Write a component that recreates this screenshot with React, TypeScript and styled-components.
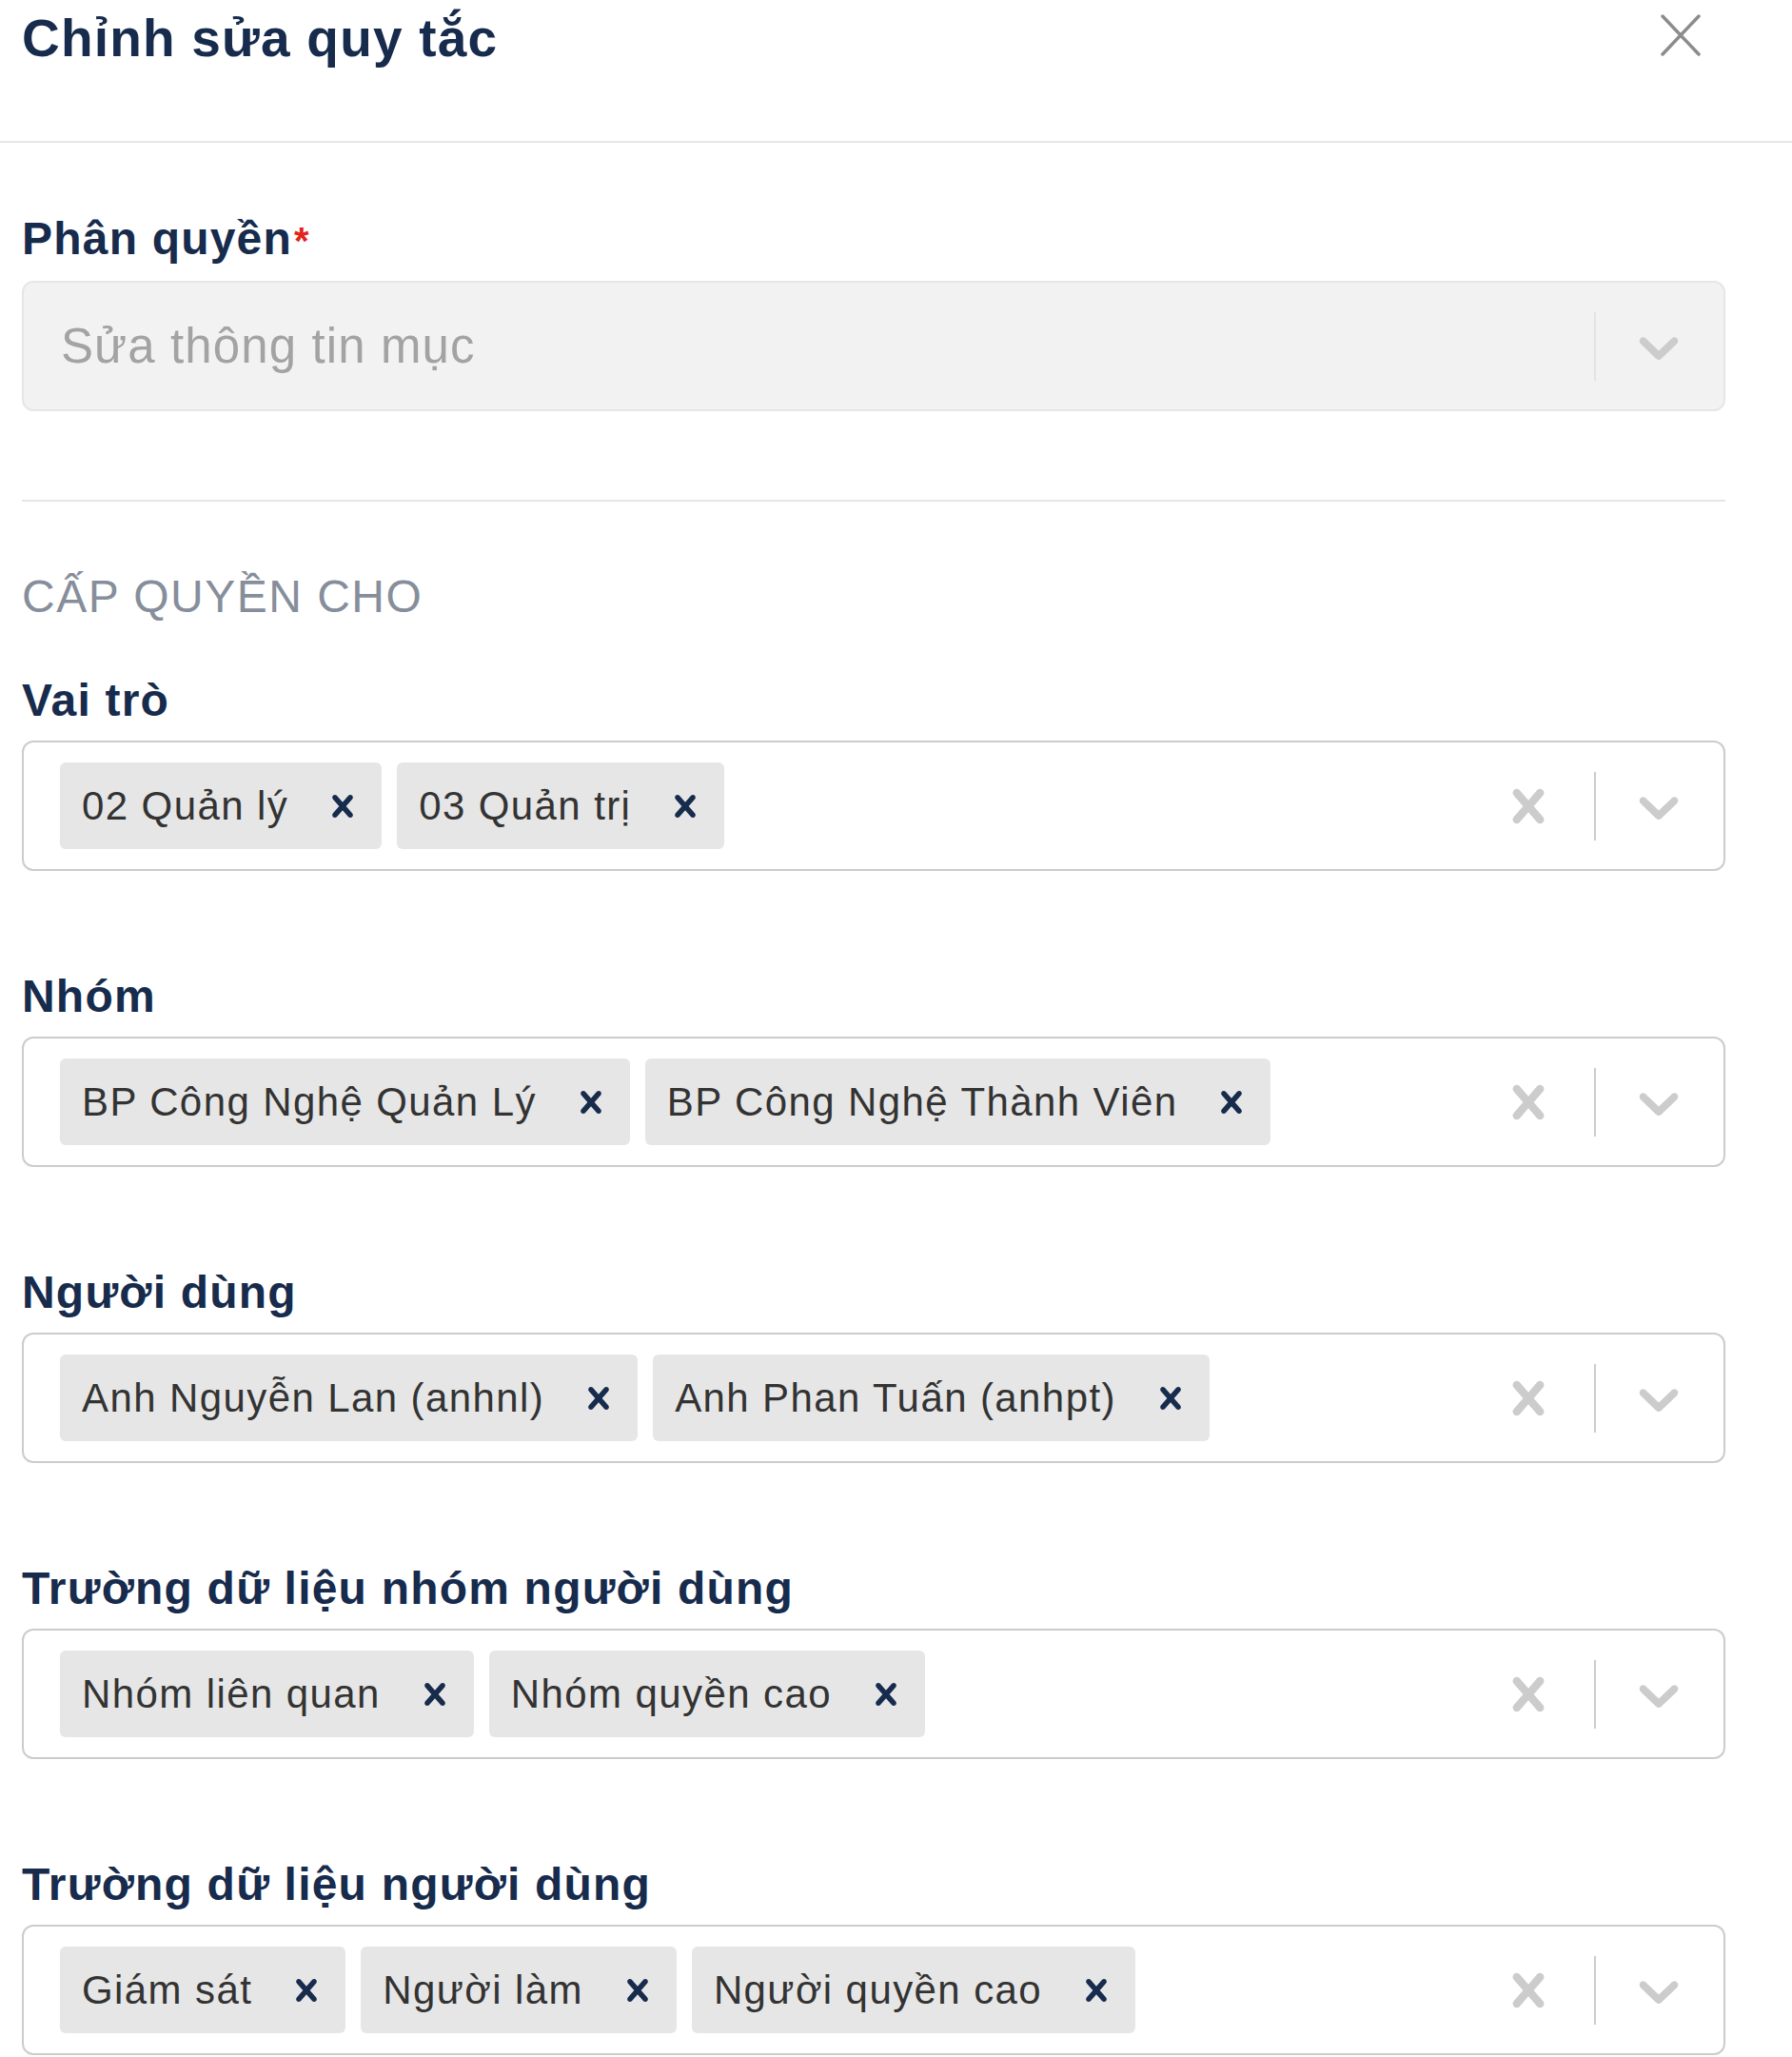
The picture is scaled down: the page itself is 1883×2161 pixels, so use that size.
import React from "react";
import styled, { createGlobalStyle } from "styled-components";

const GlobalStyle = createGlobalStyle`
  *, *::before, *::after { box-sizing: border-box; }
  html, body { margin: 0; padding: 0; background: #ffffff; }
  body { font-family: "Liberation Sans", Arial, sans-serif; color: #172b4d; }
`;

const CHEVRON =
  "M4.516 7.548c0.436-0.446 1.043-0.481 1.576 0l3.908 3.747 3.908-3.747c0.533-0.481 1.141-0.446 1.574 0 0.436 0.445 0.408 1.197 0 1.615-0.406 0.418-4.695 4.502-4.695 4.502-0.217 0.223-0.502 0.335-0.787 0.335s-0.57-0.112-0.789-0.335c0 0-4.287-4.084-4.695-4.502s-0.436-1.17 0-1.615z";
const CROSS =
  "M14.348 14.849c-0.469 0.469-1.229 0.469-1.697 0l-2.651-3.030-2.651 3.029c-0.469 0.469-1.229 0.469-1.697 0-0.469-0.469-0.469-1.229 0-1.697l2.758-3.15-2.759-3.152c-0.469-0.469-0.469-1.228 0-1.697s1.228-0.469 1.697 0l2.652 3.031 2.651-3.031c0.469-0.469 1.228-0.469 1.697 0s0.469 1.229 0 1.697l-2.758 3.152 2.758 3.15c0.469 0.469 0.469 1.229 0 1.698z";

const Page = styled.div`
  width: 1883px;
  min-height: 2161px;
  background: #fff;
`;

const Header = styled.header`
  height: 150px;
  display: flex;
  align-items: flex-start;
  justify-content: space-between;
  padding: 13px 96px 0 23px;
  border-bottom: 2px solid #e6e6e6;
`;

const Title = styled.h1`
  margin: 0;
  font-size: 55px;
  line-height: 55px;
  font-weight: 700;
  letter-spacing: 1.2px;
  color: #172b4d;
`;

const CloseButton = styled.button`
  display: block;
  margin: 2px 0 0;
  padding: 0;
  border: 0;
  background: transparent;
  width: 42px;
  height: 44px;
  color: #8c8c8c;
  svg { display: block; }
`;

const Body = styled.main`
  display: flex;
  flex-direction: column;
  padding: 73px 70px 0 23px;
`;

const Field = styled.section`
  display: flex;
  flex-direction: column;
`;

const FieldList = styled.div`
  display: flex;
  flex-direction: column;
  gap: 104px;
`;

const Label = styled.label`
  display: block;
  margin-bottom: 14px;
  font-size: 48px;
  line-height: 56px;
  font-weight: 700;
  letter-spacing: 1.2px;
  color: #172b4d;
  white-space: nowrap;
`;

const Required = styled.span`
  margin-left: 2px;
  color: #e3241b;
  font-size: 40px;
`;

const Divider = styled.hr`
  margin: 93px 0 0;
  border: 0;
  height: 2px;
  background: #e6e6e6;
`;

const SectionHeading = styled.h2`
  margin: 72px 0 53px;
  font-size: 48px;
  line-height: 56px;
  font-weight: 400;
  letter-spacing: 1.5px;
  color: #878e9b;
`;

const Control = styled.div<{ $disabled?: boolean }>`
  height: 137px;
  display: flex;
  align-items: center;
  border: 2px solid ${(p) => (p.$disabled ? "#e6e6e6" : "#cccccc")};
  background: ${(p) => (p.$disabled ? "#f2f2f2" : "#ffffff")};
  border-radius: 12px;
`;

const ValueContainer = styled.div<{ $multi?: boolean }>`
  flex: 1;
  min-width: 0;
  display: flex;
  align-items: center;
  gap: 16px;
  padding-left: ${(p) => (p.$multi ? 38 : 39)}px;
`;

const SingleValue = styled.span`
  font-size: 51px;
  letter-spacing: 1.1px;
  color: #a3a3a3;
  white-space: nowrap;
`;

const Tag = styled.span`
  display: flex;
  align-items: center;
  height: 91px;
  padding: 0 29px 0 23px;
  background: #e6e6e6;
  border-radius: 6px;
`;

const TagText = styled.span`
  font-size: 42px;
  letter-spacing: 1.4px;
  color: #333333;
  white-space: nowrap;
`;

const TagRemove = styled.span`
  display: flex;
  margin-left: 45px;
  color: #172b4d;
`;

const Indicators = styled.div`
  display: flex;
  align-items: center;
  align-self: stretch;
  padding-right: 33px;
`;

const IndicatorIcon = styled.span`
  display: flex;
  width: 70px;
  height: 70px;
  color: #cccccc;
`;

const Separator = styled.span<{ $disabled?: boolean }>`
  width: 2px;
  height: 72px;
  margin: 0 31px 0 34px;
  background: ${(p) => (p.$disabled ? "#e3e3e3" : "#cccccc")};
`;

const Icon = ({ d, size, box = "0 0 20 20" }: { d: string; size: number; box?: string }) => (
  <svg width={size} height={size} viewBox={box} fill="currentColor" aria-hidden="true">
    <path d={d} />
  </svg>
);

type FieldData = { label: string; values: string[] };

const fields: FieldData[] = [
  { label: "Vai trò", values: ["02 Quản lý", "03 Quản trị"] },
  { label: "Nhóm", values: ["BP Công Nghệ Quản Lý", "BP Công Nghệ Thành Viên"] },
  { label: "Người dùng", values: ["Anh Nguyễn Lan (anhnl)", "Anh Phan Tuấn (anhpt)"] },
  { label: "Trường dữ liệu nhóm người dùng", values: ["Nhóm liên quan", "Nhóm quyền cao"] },
  { label: "Trường dữ liệu người dùng", values: ["Giám sát", "Người làm", "Người quyền cao"] },
];

const MultiSelect = ({ values }: { values: string[] }) => (
  <Control>
    <ValueContainer $multi>
      {values.map((v) => (
        <Tag key={v}>
          <TagText>{v}</TagText>
          <TagRemove>
            <Icon d={CROSS} size={24} box="4.8 4.8 10.4 10.4" />
          </TagRemove>
        </Tag>
      ))}
    </ValueContainer>
    <Indicators>
      <IndicatorIcon>
        <Icon d={CROSS} size={70} />
      </IndicatorIcon>
      <Separator />
      <IndicatorIcon>
        <Icon d={CHEVRON} size={70} />
      </IndicatorIcon>
    </Indicators>
  </Control>
);

export default function App() {
  return (
    <Page>
      <GlobalStyle />
      <Header>
        <Title>Chỉnh sửa quy tắc</Title>
        <CloseButton aria-label="Đóng">
          <svg width="42" height="44" viewBox="0 0 42 44" aria-hidden="true">
            <path d="M2 2 L40 42 M40 2 L2 42" stroke="currentColor" strokeWidth="3.5" strokeLinecap="round" />
          </svg>
        </CloseButton>
      </Header>
      <Body>
        <Field>
          <Label>
            Phân quyền<Required>*</Required>
          </Label>
          <Control $disabled>
            <ValueContainer>
              <SingleValue>Sửa thông tin mục</SingleValue>
            </ValueContainer>
            <Indicators>
              <Separator $disabled />
              <IndicatorIcon>
                <Icon d={CHEVRON} size={70} />
              </IndicatorIcon>
            </Indicators>
          </Control>
        </Field>
        <Divider />
        <SectionHeading>CẤP QUYỀN CHO</SectionHeading>
        <FieldList>
          {fields.map((f) => (
            <Field key={f.label}>
              <Label>{f.label}</Label>
              <MultiSelect values={f.values} />
            </Field>
          ))}
        </FieldList>
      </Body>
    </Page>
  );
}
